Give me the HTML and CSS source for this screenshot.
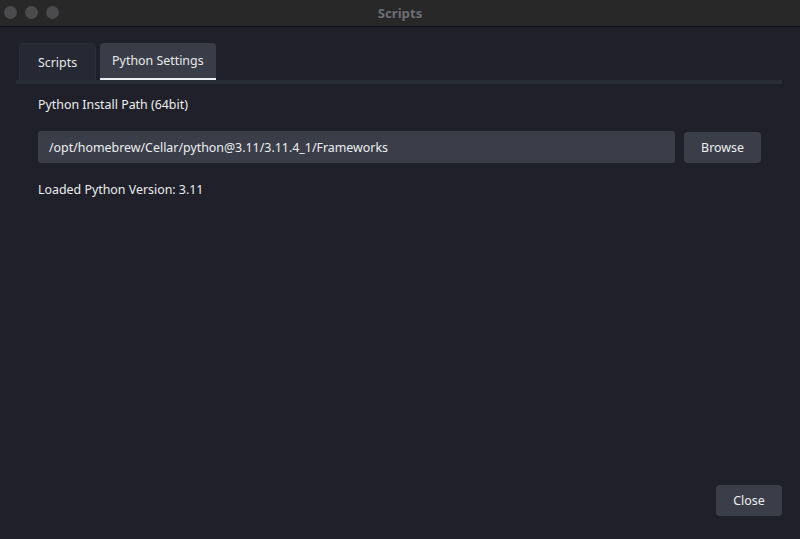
FILE: index.html
```html
<!DOCTYPE html>
<html>
<head>
<meta charset="utf-8">
<link rel="stylesheet" href="styles.css">
</head>
<body>
<div class="window">
  <div class="titlebar">
    <div class="lights"><span class="light"></span><span class="light"></span><span class="light"></span></div>
    <div class="title">Scripts</div>
  </div>
  <div class="content">
    <div class="tabbar">
      <div class="tab">Scripts</div>
      <div class="tab active">Python Settings</div>
    </div>
    <div class="panel">
      <div class="label">Python Install Path (64bit)</div>
      <div class="pathrow">
        <div class="input">/opt/homebrew/Cellar/python@3.11/3.11.4_1/Frameworks</div>
        <div class="btn browse">Browse</div>
      </div>
      <div class="label loaded">Loaded Python Version: 3.11</div>
    </div>
    <div class="footer">
      <div class="btn close">Close</div>
    </div>
  </div>
</div>
</body>
</html>
```

FILE: styles.css
```css
html, body {
  margin: 0;
  padding: 0;
  background: #1f2029;
}
.window {
  width: 800px;
  height: 539px;
  display: flex;
  flex-direction: column;
  font-family: "Noto Sans", "Open Sans", sans-serif;
  font-size: 12.4px;
  color: #ecedf0;
  overflow: hidden;
}
.titlebar {
  height: 26px;
  background: #282828;
  border-bottom: 1px solid #111111;
  position: relative;
  display: flex;
  align-items: center;
  justify-content: center;
  flex-shrink: 0;
}
.lights {
  position: absolute;
  left: 4px;
  top: 6px;
  display: flex;
  gap: 8px;
}
.light {
  width: 13px;
  height: 13px;
  border-radius: 50%;
  background: #4b4b4d;
}
.title {
  font-weight: bold;
  color: #6c6e75;
  font-size: 13.2px;
  font-family: "Noto Sans", sans-serif;
  margin-top: -1px;
}
.content {
  flex: 1;
  display: flex;
  flex-direction: column;
  padding: 16px 18px 23px 16px;
}
.tabbar {
  display: flex;
  gap: 4px;
  padding-left: 3px;
  border-bottom: 4px solid #2a2c36;
}
.tab {
  height: 37px;
  box-sizing: border-box;
  padding: 0 18px;
  display: flex;
  align-items: center;
  background: #262833;
  border: 1px dotted #30323d;
  border-bottom: none;
  border-radius: 4px 4px 0 0;
  color: #e8e9ec;
}
.tab.active {
  background: #3a3d48;
  border: none;
  border-bottom: 2px solid #eceef0;
  padding: 0 12px;
}
.panel {
  padding: 12px 21px 0 22px;
  display: flex;
  flex-direction: column;
}
.label {
  line-height: 18px;
}
.pathrow {
  display: flex;
  align-items: center;
  gap: 9px;
  margin-top: 17px;
}
.input {
  flex: 1;
  height: 32px;
  box-sizing: border-box;
  background: #3b3e49;
  border-radius: 3px;
  padding: 0 11px;
  display: flex;
  align-items: center;
  color: #eceef0;
}
.btn {
  background: #3b3e49;
  border-radius: 4px;
  display: flex;
  align-items: center;
  justify-content: center;
  color: #eceef0;
  box-sizing: border-box;
}
.browse {
  width: 77px;
  height: 31px;
}
.loaded {
  margin-top: 18px;
}
.footer {
  margin-top: auto;
  display: flex;
  justify-content: flex-end;
}
.close {
  width: 66px;
  height: 31px;
}
```
